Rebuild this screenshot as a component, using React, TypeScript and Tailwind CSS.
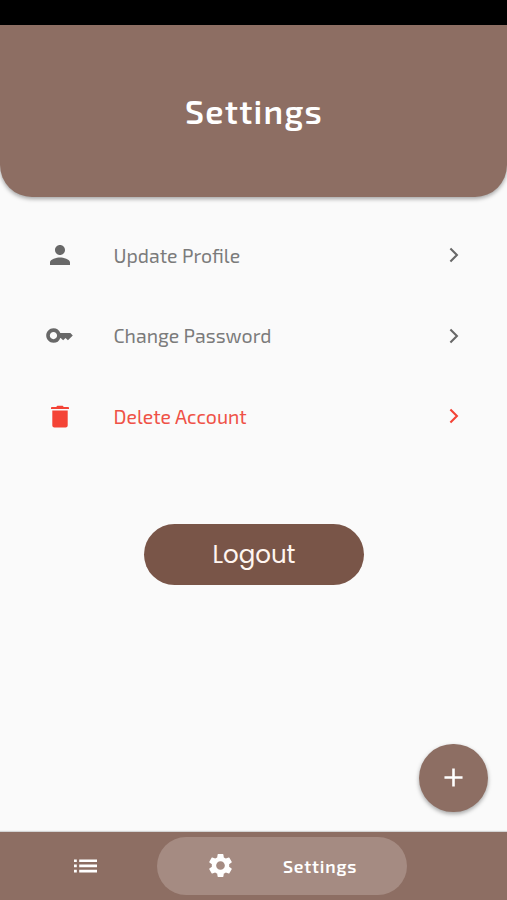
import type { ReactNode } from "react";
import { MdAdd, MdKey, MdPerson, MdSettings } from "react-icons/md";

type RowProps = { icon: ReactNode; label: string; color: string; textColor: string };

function TrashIcon() {
  return (
    <svg viewBox="0 0 18 23" className="ml-[5.5px] h-[23px] w-[18px]" fill="currentColor">
      <path d="M1.3 5.4h15.4v15a2.1 2.1 0 0 1-2.1 2.1H3.4a2.1 2.1 0 0 1-2.1-2.1zM.9 1.9h4.3L6.3.8h5.4l1.1 1.1h4.3q.9 0 .9.9v1.3H0V2.8q0-.9.9-.9z" />
    </svg>
  );
}

function ListIcon() {
  return (
    <svg viewBox="0 0 23 14" className="h-[14px] w-[23px]" fill="currentColor">
      <path d="M0 .4h2.8v2.7H0zM0 5.6h2.8v2.7H0zM0 10.8h2.8v2.7H0zM5.2.4H23v2.7H5.2zM5.2 5.6H23v2.7H5.2zM5.2 10.8H23v2.7H5.2z" />
    </svg>
  );
}

function Chevron() {
  return (
    <svg viewBox="0 0 10 16" className="ml-auto h-4 w-[10px]" fill="none" stroke="currentColor" strokeWidth="2.1">
      <path d="M1.4 1.6 7.9 8l-6.5 6.4" />
    </svg>
  );
}

function Row({ icon, label, color, textColor }: RowProps) {
  return (
    <button className={`flex h-[80.5px] w-full items-center pl-[45px] pr-[48px] ${color}`}>
      <span className="flex w-[68.5px] shrink-0">{icon}</span>
      <span className={`whitespace-nowrap pt-px text-[19.5px] leading-6 ${textColor}`}>{label}</span>
      <Chevron />
    </button>
  );
}

export default function App() {
  return (
    <div className="flex h-[900px] w-[507px] flex-col overflow-hidden bg-[#fafafa] font-['Exo_2','Noto_Sans',sans-serif]">
      <div className="h-[25px] shrink-0 bg-black" />
      <header className="flex h-[171.5px] shrink-0 items-center justify-center rounded-b-[32px] bg-[#8d6e63] shadow-[0_2px_4px_rgba(0,0,0,0.35)]">
        <h1 className="pl-px text-[33px] font-semibold leading-10 tracking-[1.3px] text-white">Settings</h1>
      </header>

      <main className="flex min-h-0 flex-1 flex-col pt-[18.5px]">
        <Row icon={<MdPerson size={30} />} label="Update Profile" color="text-[#686868]" textColor="text-[#7b7b7b]" />
        <Row icon={<MdKey size={29} />} label="Change Password" color="text-[#686868]" textColor="text-[#7b7b7b]" />
        <Row icon={<TrashIcon />} label="Delete Account" color="text-[#f44336]" textColor="text-[#ef5146]" />
        <button className="ml-[144px] mt-[67px] h-[61px] w-[220px] rounded-full bg-[#795548] pt-[2px] font-['Poppins','Inter',sans-serif] text-[24.5px] text-[#fff5f0]">
          Logout
        </button>
        <button className="mb-5 mr-[19.5px] mt-auto flex size-[68.5px] items-center justify-center self-end rounded-full bg-[#8d6e63] text-white shadow-[0_2px_4px_rgba(0,0,0,0.35)]">
          <MdAdd size={31} />
        </button>
      </main>

      <nav className="flex h-[68px] shrink-0 items-center bg-[#8d6e63] text-white shadow-[0_-1px_1px_rgba(0,0,0,0.15)]">
        <button className="flex w-[157px] justify-center pl-[13px]">
          <ListIcon />
        </button>
        <button className="mb-px flex h-[58px] w-[250px] items-center rounded-full bg-[#a58b82] pl-[49px]">
          <MdSettings size={29} />
          <span className="ml-[48px] pt-[2px] text-[17.5px] font-semibold leading-6 tracking-[0.8px]">Settings</span>
        </button>
      </nav>
    </div>
  );
}
